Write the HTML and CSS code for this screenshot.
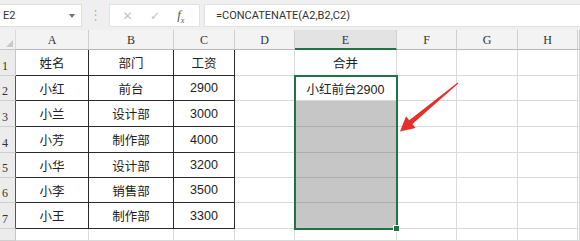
FILE: index.html
```html
<!DOCTYPE html>
<html lang="zh-CN">
<head>
<meta charset="UTF-8">
<title>合并</title>
<link rel="stylesheet" href="styles.css">
</head>
<body>
    <div class="toolbar">
        <div class="namebox">E2<span class="drop"></span></div>
        <div class="dots">⋮</div>
        <div class="funcs">
            <span class="fbtn">✕</span>
            <span class="fbtn">✓</span>
            <span class="fx">f<sub>x</sub></span>
        </div>
        <div class="formula">=CONCATENATE(A2,B2,C2)</div>
    </div>

    <div class="sheet">
        <div class="corner"><span class="tri"></span></div>
        <div class="ch">A</div><div class="ch">B</div><div class="ch">C</div><div class="ch">D</div>
        <div class="ch sel">E</div><div class="ch">F</div><div class="ch">G</div><div class="ch">H</div><div class="ch end"></div>

        <div class="rh">1</div>
        <div class="c t">姓名</div><div class="c t">部门</div><div class="c t">工资</div><div class="c"></div>
        <div class="c">合并</div><div class="c"></div><div class="c"></div><div class="c"></div><div class="c"></div>

        <div class="rh on">2</div>
        <div class="c t">小红</div><div class="c t">前台</div><div class="c t">2900</div><div class="c"></div>
        <div class="c">小红前台2900</div><div class="c"></div><div class="c"></div><div class="c"></div><div class="c"></div>

        <div class="rh on">3</div>
        <div class="c t">小兰</div><div class="c t">设计部</div><div class="c t">3000</div><div class="c"></div>
        <div class="c g"></div><div class="c"></div><div class="c"></div><div class="c"></div><div class="c"></div>

        <div class="rh on">4</div>
        <div class="c t">小芳</div><div class="c t">制作部</div><div class="c t">4000</div><div class="c"></div>
        <div class="c g"></div><div class="c"></div><div class="c"></div><div class="c"></div><div class="c"></div>

        <div class="rh on">5</div>
        <div class="c t">小华</div><div class="c t">设计部</div><div class="c t">3200</div><div class="c"></div>
        <div class="c g"></div><div class="c"></div><div class="c"></div><div class="c"></div><div class="c"></div>

        <div class="rh on">6</div>
        <div class="c t">小李</div><div class="c t">销售部</div><div class="c t">3500</div><div class="c"></div>
        <div class="c g"></div><div class="c"></div><div class="c"></div><div class="c"></div><div class="c"></div>

        <div class="rh on">7</div>
        <div class="c t">小王</div><div class="c t">制作部</div><div class="c t">3300</div><div class="c"></div>
        <div class="c g"></div><div class="c"></div><div class="c"></div><div class="c"></div><div class="c"></div>

        <div class="rh"></div>
        <div class="c"></div><div class="c"></div><div class="c"></div><div class="c"></div>
        <div class="c"></div><div class="c"></div><div class="c"></div><div class="c"></div><div class="c"></div>

        <span class="selection"><span class="handle"></span></span>
    </div>

    <svg class="arrow" width="75" height="62" viewBox="0 0 75 62">
        <polygon points="68.3,8.4 22.4,49 25.6,53 10,56.5 16,41.2 19.2,45.2 67.7,7.6" fill="#e8302a"/>
    </svg>
</body>
</html>
```

FILE: styles.css
```css
body {
    margin: 0;
    width: 580px;
    height: 241px;
    overflow: hidden;
    position: relative;
    background: #fff;
    font-family: "Liberation Sans", "Noto Sans CJK SC", sans-serif;
    color: #222;
}

/* formula bar */
.toolbar {
    height: 30px;
    box-sizing: border-box;
    padding: 4px 0 3px 0;
    display: flex;
    background: #efefef;
}

.namebox {
    width: 82px;
    background: #fff;
    border: 1px solid #dedede;
    border-left: none;
    box-sizing: border-box;
    font-family: Roboto, sans-serif;
    font-size: 11px;
    color: #333;
    padding-left: 3px;
    line-height: 21px;
    position: relative;
}

.drop {
    position: absolute;
    right: 6px;
    top: 9px;
    border-left: 3px solid transparent;
    border-right: 3px solid transparent;
    border-top: 4px solid #777;
}

.dots {
    width: 27px;
    text-align: center;
    color: #bbb;
    font-size: 13px;
    line-height: 22px;
}

.funcs {
    width: 91px;
    background: #fff;
    border: 1px solid #e2e2e2;
    box-sizing: border-box;
    display: flex;
    align-items: center;
    justify-content: space-around;
    padding: 0 6px 0 4px;
}

.fbtn {
    color: #c4c4c4;
    font-family: "DejaVu Sans", sans-serif;
    font-size: 12px;
}

.fx {
    font-family: "Liberation Serif", serif;
    font-style: italic;
    font-size: 13px;
    color: #555;
}

.fx sub {
    font-size: 8px;
}

.formula {
    flex: 1;
    margin-left: 4px;
    background: #fff;
    border: 1px solid #e2e2e2;
    border-right: none;
    box-sizing: border-box;
    font-family: Roboto, sans-serif;
    font-size: 11px;
    color: #333;
    padding-left: 11px;
    line-height: 21px;
}

/* sheet grid */
.sheet {
    display: grid;
    grid-template-columns: 16px 73px 85px 61px 60px 102px 60px 61px 60px 2px;
    grid-template-rows: 20px 26px 25px 26px 26px 25px 25px 26px 12px;
    position: relative;
}

.sheet > div {
    box-sizing: border-box;
    border-right: 1px solid #dadada;
    border-bottom: 1px solid #dadada;
}

.corner {
    background: #f1f1f1;
    position: relative;
    border-bottom-color: #c6c6c6 !important;
}

.tri {
    position: absolute;
    right: 2px;
    bottom: 2px;
    border-left: 7px solid transparent;
    border-bottom: 7px solid #c9c9c9;
}

.ch {
    background: #f3f3f3;
    border-bottom-color: #b8b8b8 !important;
    border-right-color: #cfcfcf !important;
    font-family: "Liberation Serif", serif;
    font-size: 12px;
    color: #333;
    text-align: center;
    line-height: 20px;
}

.ch.sel {
    background: #e3e3e3;
    border-bottom: 2px solid #217346 !important;
}

.rh {
    background: #ececec;
    border-right-color: #c6c6c6 !important;
    border-bottom-color: #cfcfcf !important;
    font-family: "Liberation Serif", serif;
    font-size: 12px;
    color: #333;
    padding-left: 2px;
    display: flex;
    align-items: flex-end;
    padding-bottom: 1px;
}

.rh.on {
    border-right: 1px solid #217346 !important;
}

.c {
    font-size: 12.5px;
    display: flex;
    align-items: center;
    justify-content: center;
}

.c.t {
    border-right-color: #2a2a2a;
    border-bottom-color: #2a2a2a;
}

.c.g {
    background: #c6c6c6;
    border-bottom-color: #adadad;
}

/* selection rectangle over E2:E7 */
.selection {
    position: absolute;
    left: 294px;
    top: 45px;
    width: 104px;
    height: 155px;
    box-sizing: border-box;
    border: 2px solid #217346;
}

.handle {
    position: absolute;
    right: -4px;
    bottom: -4px;
    width: 5px;
    height: 5px;
    background: #217346;
    border: 1px solid #fff;
}

.arrow {
    position: absolute;
    left: 390px;
    top: 75px;
}
```
